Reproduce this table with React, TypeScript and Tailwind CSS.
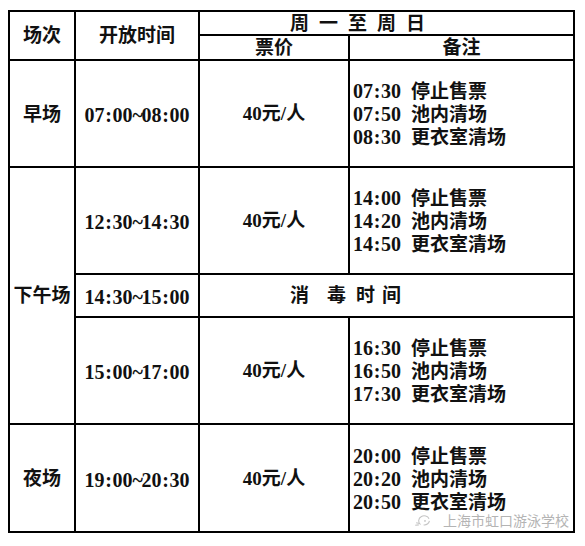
import React from "react";

const FONT = '"Liberation Serif", "Noto Sans CJK SC", serif';

function T({ s }: { s: string }) {
  const parts = s.split("");
  return (
    <span className="text-[20px]">
      {parts.map((c, i) =>
        c === ":" ? (
          <span key={i} className="inline-block w-[8px] text-center">
            :
          </span>
        ) : c === "~" ? (
          <span key={i} className="inline-block w-[9px] text-center">
            ~
          </span>
        ) : (
          <span key={i}>{c}</span>
        )
      )}
    </span>
  );
}

function Remarks({ lines }: { lines: [string, string][] }) {
  return (
    <div className="bg-white flex flex-col justify-center pl-[3px] pt-[2px] leading-[23px]">
      {lines.map(([t, txt], i) => (
        <div key={i} className="flex items-center gap-[10px] whitespace-nowrap">
          <T s={t} />
          <span>{txt}</span>
        </div>
      ))}
    </div>
  );
}

function C({ children, className = "" }: { children?: React.ReactNode; className?: string }) {
  return <div className={`bg-white flex items-center justify-center whitespace-nowrap ${className}`}>{children}</div>;
}

export default function App() {
  return (
    <div className="w-[585px] h-[546px] bg-white relative" style={{ fontFamily: FONT }}>
      <div className="pt-[10px] pl-[8px]">
        <div
          className="grid bg-black p-[2px] gap-[2px] w-[567px] text-[19px] font-bold text-[#111]"
          style={{
            gridTemplateColumns: "64px 122px 148px 223px",
            gridTemplateRows: "22px 23px 105px 105px 41px 105px 106px",
          }}
        >
          <C className="row-span-2 pt-[2px]">场次</C>
          <C className="row-span-2 pt-[2px]">开放时间</C>
          <div className="col-span-2 bg-white flex items-center pl-[90px] gap-[10px] leading-none">
            <span>周</span>
            <span>一</span>
            <span>至</span>
            <span>周</span>
            <span>日</span>
          </div>
          <C className="leading-none">票价</C>
          <C className="leading-none">备注</C>

          <C className="pt-[3px]">早场</C>
          <C className="pt-[3px]"><T s="07:00~08:00" /></C>
          <C className="pt-[2px]">40元/人</C>
          <Remarks
            lines={[
              ["07:30", "停止售票"],
              ["07:50", "池内清场"],
              ["08:30", "更衣室清场"],
            ]}
          />

          <C className="row-span-3 pt-[2px]">下午场</C>
          <C className="pt-[3px]"><T s="12:30~14:30" /></C>
          <C className="pt-[2px]">40元/人</C>
          <Remarks
            lines={[
              ["14:00", "停止售票"],
              ["14:20", "池内清场"],
              ["14:50", "更衣室清场"],
            ]}
          />

          <C className="pt-[2px]"><T s="14:30~15:00" /></C>
          <div className="col-span-2 bg-white flex items-center pl-[90px] pt-[2px]">
            <span>消</span>
            <span className="ml-[18px]">毒</span>
            <span className="ml-[10px]">时</span>
            <span className="ml-[7px]">间</span>
          </div>

          <C className="pt-[3px]"><T s="15:00~17:00" /></C>
          <C className="pt-[2px]">40元/人</C>
          <Remarks
            lines={[
              ["16:30", "停止售票"],
              ["16:50", "池内清场"],
              ["17:30", "更衣室清场"],
            ]}
          />

          <C className="pt-[3px]">夜场</C>
          <C className="pt-[3px]"><T s="19:00~20:30" /></C>
          <C className="pt-[2px]">40元/人</C>
          <Remarks
            lines={[
              ["20:00", "停止售票"],
              ["20:20", "池内清场"],
              ["20:50", "更衣室清场"],
            ]}
          />
        </div>
      </div>

      <div
        className="absolute left-[413px] top-[512px] flex items-center gap-[6px] text-[#b4b4b4] text-[14px] leading-none"
        style={{ fontFamily: '"Noto Sans CJK SC", sans-serif', textShadow: "0 0 2px #fff, 0 0 2px #fff" }}
      >
        <svg width="24" height="16" viewBox="0 0 24 18" fill="none" stroke="#c4c4c4" strokeWidth="1.2">
          <path d="M7 14 C4 12 4 7 8 5 C11 3.5 15 4.5 16.5 7.5" />
          <path d="M17 10 C16.5 13 13.5 15 10.5 14.5" />
          <path d="M2 12 L6 13" />
          <path d="M1 15 L5 14.5" />
          <circle cx="12" cy="10" r="1" fill="#c4c4c4" stroke="none" />
        </svg>
        <span>上海市虹口游泳学校</span>
      </div>
    </div>
  );
}
